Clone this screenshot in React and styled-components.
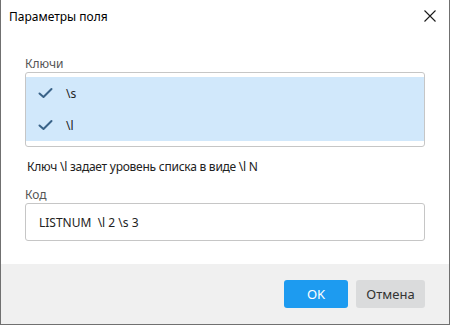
import React from "react";
import styled, { createGlobalStyle } from "styled-components";

const GlobalStyle = createGlobalStyle`
  html, body {
    margin: 0;
    padding: 0;
    background: #ffffff;
  }
  body {
    font-family: "Noto Sans", "Open Sans", sans-serif;
  }
`;

const keys = ["\\s", "\\l"];

const App = () => {
  return (
    <>
      <GlobalStyle />
      <Dialog>
        <TitleBar>
          <Title>Параметры поля</Title>
          <CloseButton aria-label="close">
            <svg width="12" height="12" viewBox="0 0 12 12">
              <path d="M0.5 0.5 L11.5 11.5 M11.5 0.5 L0.5 11.5" stroke="#1a1a1a" strokeWidth="1.1" fill="none" />
            </svg>
          </CloseButton>
        </TitleBar>
        <Body>
          <FieldLabel>Ключи</FieldLabel>
          <ListBox>
            {keys.map((k) => (
              <ListRow key={k} selected>
                <svg width="15" height="12" viewBox="0 0 15 12">
                  <path d="M1.5 6.5 L5.5 10 L13.5 2" stroke="#3a6388" strokeWidth="2" fill="none" strokeLinecap="round" strokeLinejoin="round" />
                </svg>
                <span>{k}</span>
              </ListRow>
            ))}
          </ListBox>
          <Hint>Ключ \l задает уровень списка в виде \l N</Hint>
          <FieldLabel>Код</FieldLabel>
          <CodeInput defaultValue="LISTNUM  \l 2 \s 3" />
        </Body>
        <Footer>
          <Button primary>OK</Button>
          <Button>Отмена</Button>
        </Footer>
      </Dialog>
    </>
  );
};

export default App;

const Dialog = styled.div`
  width: 450px;
  height: 325px;
  box-sizing: border-box;
  border: 1px solid #707070;
  border-top: none;
  display: flex;
  flex-direction: column;
  background: #fff;
`;

const TitleBar = styled.div`
  height: 32px;
  display: flex;
  align-items: center;
  justify-content: space-between;
  padding: 0 8px 0 8px;
`;

const Title = styled.div`
  font-size: 12px;
  color: #000;
  margin-top: 1px;
`;

const CloseButton = styled.div`
  width: 24px;
  height: 24px;
  display: flex;
  align-items: center;
  justify-content: center;
  margin-right: -1px;
`;

const Body = styled.div`
  flex: 1;
  display: flex;
  flex-direction: column;
  padding: 24px 24px 0 24px;
`;

const FieldLabel = styled.div`
  font-size: 12px;
  color: #555;
  line-height: 16px;
  margin-bottom: 0;
`;

const ListBox = styled.div`
  height: 75px;
  box-sizing: border-box;
  border: 1px solid #c6c6c6;
  border-radius: 3px;
  padding: 4px 0;
  display: flex;
  flex-direction: column;
`;

const ListRow = styled.div`
  height: 32px;
  display: flex;
  align-items: center;
  gap: 13px;
  padding-left: 12px;
  background: ${(p) => (p.selected ? "#d1e8fb" : "transparent")};
  font-size: 12px;
  color: #222;
`;

const Hint = styled.div`
  font-size: 12px;
  letter-spacing: -0.25px;
  color: #222;
  line-height: 16px;
  margin: 12px 0 12px 2px;
`;

const CodeInput = styled.input`
  height: 38px;
  box-sizing: border-box;
  border: 1px solid #c6c6c6;
  border-radius: 3px;
  padding: 0 13px;
  font-family: "Noto Sans", "Open Sans", sans-serif;
  font-size: 12px;
  color: #222;
  outline: none;
`;

const Footer = styled.div`
  height: 60px;
  background: #f0f0f0;
  display: flex;
  align-items: center;
  justify-content: flex-end;
  gap: 8px;
  padding: 0 24px 0 0;
`;

const Button = styled.button`
  height: 28px;
  min-width: ${(p) => (p.primary ? "64px" : "69px")};
  border: none;
  border-radius: 3px;
  font-family: "Noto Sans", "Open Sans", sans-serif;
  font-size: 13px;
  padding: 0 8px;
  background: ${(p) => (p.primary ? "#1d9bf0" : "#dadbdc")};
  color: ${(p) => (p.primary ? "#fff" : "#333")};
`;
